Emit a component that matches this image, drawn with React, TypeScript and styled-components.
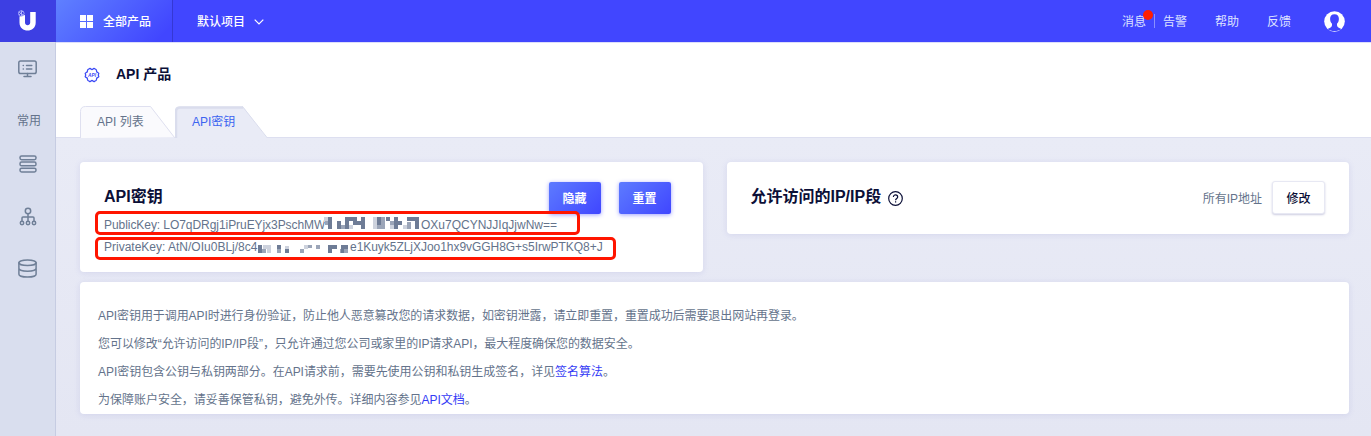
import React from "react";
import styled, { createGlobalStyle } from "styled-components";

const Global = createGlobalStyle`
  * { box-sizing: border-box; }
  body {
    margin: 0;
    font-family: "Liberation Sans", "Noto Sans CJK SC", sans-serif;
    font-size: 12px;
    color: #64738b;
    background: #e4e6f3;
    overflow: hidden;
  }
  p, h1, h2 { margin: 0; }
`;

const Page = styled.div`
  height: 436px;
  display: flex;
  flex-direction: column;
`;
const Header = styled.header`
  height: 42px;
  flex: none;
  display: flex;
  align-items: stretch;
  background: #4146ff;
  color: #fff;
`;
const Logo = styled.div`
  width: 56px;
  background: #3d3fe3;
  display: flex;
  svg { display: block; }
`;
const Products = styled.div`
  width: 117px;
  padding-left: 24px;
  display: flex;
  align-items: center;
  gap: 10px;
  font-weight: 500;
  border-right: 1px solid #3538d4;
  background: linear-gradient(135deg, #5f80ff 0%, #4146ff 90%);
  svg { margin-top: 1px; }
  span { margin-top: -2px; }
`;
const Project = styled.div`
  padding-left: 24px;
  flex: 1;
  display: flex;
  align-items: center;
  gap: 9px;
  font-weight: 500;
  svg { margin-top: 1px; }
  span { margin-top: -2px; }
`;
const Nav = styled.nav`
  display: flex;
  align-items: center;
  padding-right: 26px;
  color: #dfe3ff;
`;
const NavItem = styled.span<{ $gap: number }>`
  position: relative;
  margin-top: -2px;
  margin-right: ${(p) => p.$gap}px;
`;
const Dot = styled.i`
  position: absolute;
  width: 10px;
  height: 10px;
  border-radius: 50%;
  background: #ff1e00;
  top: -2px;
  right: -7px;
`;
const Separator = styled.i`
  width: 1px;
  height: 14px;
  margin-right: 8px;
  background: #8a90ff;
`;
const Body = styled.div`
  flex: 1;
  min-height: 0;
  display: flex;
`;
const Sidebar = styled.aside`
  width: 56px;
  flex: none;
  background: #d9deee;
  border-right: 1px solid #c6cce2;
  padding-top: 17px;
  display: flex;
  flex-direction: column;
  align-items: center;
`;
const SideItem = styled.div<{ $gap: number }>`
  height: 20px;
  margin-bottom: ${(p) => p.$gap}px;
  display: flex;
  align-items: center;
  svg { display: block; }
`;
const SideLabel = styled(SideItem)`
  padding-left: 3px;
`;
const Main = styled.main`
  flex: 1;
  min-width: 0;
  background: linear-gradient(#e9ebf6 95px, #e4e6f3);
`;
const Top = styled.section`
  height: 96px;
  background: #fff;
  border-top: 1px solid #dcdefb;
  border-bottom: 1px solid #dddff0;
  padding-left: 24px;
`;
const TitleRow = styled.div`
  height: 63px;
  padding-left: 4px;
  display: flex;
  align-items: center;
  gap: 16px;
`;
const PageTitle = styled.h1`
  font-size: 14px;
  line-height: 20px;
  font-weight: 700;
  color: #0b0f37;
  padding-bottom: 2px;
`;
const Tabs = styled.div`
  display: flex;
  height: 32px;
`;
const Tab = styled.div<{ $active?: boolean }>`
  position: relative;
  width: 95px;
  padding-left: 17px;
  line-height: 32px;
  color: ${(p) => (p.$active ? "#3c64f0" : "#64738b")};
  span { position: relative; }
`;
const TabShape = styled.svg`
  position: absolute;
  left: 0;
  top: 0;
`;
const Content = styled.section`
  padding: 24px 22px 0 24px;
`;
const CardRow = styled.div`
  display: flex;
  align-items: flex-start;
  gap: 24px;
  margin-bottom: 10px;
`;
const Card = styled.div<{ $height: number }>`
  flex: 1;
  min-width: 0;
  height: ${(p) => p.$height}px;
  background: #fff;
  border-radius: 4px;
  box-shadow: 0 1px 6px rgba(96, 96, 190, 0.14);
  padding: 19px 24px 0;
`;
const NoteCard = styled(Card)`
  padding: 20px 18px 0;
`;
const CardHead = styled.div`
  height: 33px;
  display: flex;
  align-items: center;
`;
const CardTitle = styled.h2`
  flex: 1;
  display: flex;
  align-items: center;
  gap: 7px;
  font-size: 16px;
  line-height: 24px;
  font-weight: 700;
  color: #0b0f37;
  padding-bottom: 1px;
  svg { margin-top: 3px; }
`;
const Primary = styled.button`
  width: 52px;
  height: 32px;
  margin: 1px 8px 0 10px;
  padding: 0 0 2px;
  border: 0;
  border-radius: 2px;
  color: #fff;
  font: inherit;
  font-weight: 700;
  background: linear-gradient(135deg, #5d7bff, #4046ff);
  box-shadow: 0 1px 4px rgba(65, 70, 255, 0.5);
`;
const Secondary = styled.button`
  width: 53px;
  height: 33px;
  margin-left: 10px;
  padding: 0;
  border: 1px solid #e7e8f3;
  border-radius: 3px;
  color: #0b0f37;
  font: inherit;
  font-weight: 500;
  background: #fff;
  box-shadow: 0 1px 2px rgba(60, 60, 140, 0.25);
`;
const Keys = styled.div`
  position: relative;
  margin: -3px 0 0 -9px;
  display: flex;
  flex-direction: column;
  gap: 2px;
`;
const KeyBox = styled.div<{ $w: number; $h: number }>`
  width: ${(p) => p.$w}px;
  height: ${(p) => p.$h}px;
  border: 3px solid #ff1500;
  border-radius: 5px;
  padding-left: 6px;
  display: flex;
  align-items: center;
  white-space: nowrap;
  svg { flex: none; display: block; }
`;
const KeyText = styled.span<{ $w: number; $ls?: number; $down?: number }>`
  width: ${(p) => p.$w}px;
  flex: none;
  line-height: 18px;
  letter-spacing: ${(p) => p.$ls ?? 0}px;
  margin-top: ${(p) => p.$down ?? 0}px;
`;
const Note = styled.p<{ $ls: number }>`
  line-height: 28px;
  letter-spacing: ${(p) => p.$ls}px;
`;
const Link = styled.a`
  color: #343cf5;
`;

type Cell = [number, number, number, number, string];
const D = "#6e7c96", M = "#9ba5b8", L = "#cdd2dd";

const PUBLIC_CELLS: Cell[] = [
  [0, 0, 4, 5, L], [1, 4, 4, 4, M], [4, 0, 4, 12, D],
  [13, 4, 4, 8, D], [17, 8, 4, 4, M], [21, 0, 4, 12, D], [25, 0, 4, 4, D],
  [29, 0, 4, 8, D], [33, 4, 4, 4, D], [37, 0, 4, 12, D], [25, 8, 4, 4, L],
  [49, 0, 4, 12, L], [53, 0, 4, 8, D], [57, 0, 4, 12, M], [53, 8, 4, 4, M],
  [62, 0, 4, 4, D], [66, 4, 4, 4, M], [70, 0, 4, 12, D], [74, 4, 4, 4, D], [66, 8, 4, 4, L],
  [79, 8, 4, 4, L], [83, 5, 4, 7, M],
  [83, 0, 8, 4, D], [91, 0, 4, 12, D],
];
const PRIVATE_CELLS: Cell[] = [
  [0, 0, 4, 8, D], [4, 4, 4, 4, M], [5, 0, 4, 4, L], [9, 0, 4, 8, L],
  [19, 0, 4, 4, D], [19, 4, 4, 4, M], [27, 4, 4, 4, D], [27, 1, 4, 3, L],
  [42, 4, 4, 4, M], [46, 0, 4, 4, L], [50, 0, 4, 3, M],
  [58, 0, 4, 4, M],
  [70, 0, 4, 8, D], [74, 0, 5, 4, D],
  [82, 4, 4, 4, M], [83, 0, 7, 8, D], [86, 4, 4, 4, M],
];

const Mosaic = ({ cells, width, height }: { cells: Cell[]; width: number; height: number }) => (
  <svg width={width} height={height} shapeRendering="crispEdges">
    {cells.map(([x, y, w, h, fill], i) => (
      <rect key={i} x={x} y={y} width={w} height={h} fill={fill} />
    ))}
  </svg>
);

const stroke = { fill: "none", stroke: "#6f7f97", strokeWidth: 1.5, strokeLinecap: "round", strokeLinejoin: "round" } as const;

const LogoIcon = () => (
  <svg width="56" height="42">
    <path d="M19.500 16.500V22.500c0 10.800 16.200 10.800 16.200 0V12h-5.500v10.500c0 3.700-5.200 3.700-5.200 0V15z" fill="#fff" />
    <g fill="none" stroke="#b9bcff" strokeWidth=".8">
      <circle cx="21.300" cy="13.500" r="2.800" />
      <path d="M18.500 12l5 3M19 15l4-4M21.500 10.500v6" />
    </g>
  </svg>
);
const GridIcon = () => (
  <svg width="13" height="13" fill="#fff">
    <path d="M0 0h6v6H0zM7 0h6v6H7zM0 7h6v6H0zM7 7h6v6H7z" />
  </svg>
);
const AvatarIcon = () => (
  <svg width="21" height="21" viewBox="0 0 21 21">
    <circle cx="10.5" cy="10.5" r="10.3" fill="#fff" />
    <path d="M10.5 3.3c3 0 4.4 1.9 4.4 4.5 0 2.2-.7 3.9-1.9 5v1.5c0 1.800 2.200 2.700 4.400 3.700-1.8 1.400-4.2 2.100-6.9 2.100s-5.100-.7-6.900-2.100c2.200-1 4.400-1.900 4.400-3.700v-1.500c-1.200-1.100-1.900-2.800-1.900-5 0-2.600 1.400-4.500 4.400-4.500z" fill="#4146ff" />
  </svg>
);
const ApiIcon = () => (
  <svg width="16" height="16" viewBox="0 0 16 16">
    <path d="M5.300 1.700Q6.300 1.200 7 2Q8 2.900 9 2Q9.700 1.200 10.700 1.700L12 2.500Q12.700 3 12.500 4Q12.500 5.300 13.800 5.500Q14.800 5.800 14.800 6.700Q13.700 8 14.800 9.300Q14.800 10.200 13.800 10.500Q12.500 10.700 12.500 12Q12.700 13 12 13.500L10.700 14.300Q9.700 14.800 9 14Q8 13.100 7 14Q6.300 14.800 5.300 14.300L4 13.500Q3.300 13 3.500 12Q3.500 10.700 2.200 10.500Q1.200 10.200 1.200 9.300Q2.300 8 1.200 6.700Q1.200 5.800 2.200 5.500Q3.500 5.300 3.500 4Q3.300 3 4 2.500Z" fill="none" stroke="#3c4af5" strokeWidth="1.300" />
    <text x="8" y="9.900" fontSize="4.800" fontWeight="700" fontStyle="italic" textAnchor="middle" fill="#3c4af5">API</text>
  </svg>
);
const HelpIcon = () => (
  <svg width="15" height="15" viewBox="0 0 15 15" fill="none" stroke="#0b0f37" strokeWidth="1.200">
    <circle cx="7.500" cy="7.500" r="6.800" />
    <path d="M5.400 5.900c0-2.800 4.300-2.700 4.300 0 0 1.500-2.100 1.600-2.100 3.300M7.600 10.300v1.300" />
  </svg>
);
const MonitorIcon = () => (
  <svg width="19" height="18" viewBox="0 0 19 18" {...stroke}>
    <rect x=".8" y="1" width="17.400" height="12.500" rx="1.800" />
    <path d="M9.500 13.500v2.700M6 16.500h7M8.500 5.500h5.300M8.500 9h5.300M5.200 5.500h.2M5.200 9h.2" />
  </svg>
);
const StackIcon = () => (
  <svg width="18" height="18" viewBox="0 0 18 18" {...stroke}>
    <rect x="1" y="1" width="16" height="3.700" rx="1.600" />
    <rect x="1" y="7.100" width="16" height="3.700" rx="1.600" />
    <rect x="1" y="13.200" width="16" height="3.700" rx="1.600" />
  </svg>
);
const TreeIcon = () => (
  <svg width="18" height="19" viewBox="0 0 18 19" {...stroke}>
    <circle cx="9" cy="4" r="2.700" />
    <path d="M9 6.700v7.500M3 14.200V11q0-1 1-1h10q1 0 1 1v3.200" />
    <circle cx="3" cy="16" r="1.700" />
    <circle cx="9" cy="16" r="1.700" />
    <circle cx="15" cy="16" r="1.700" />
  </svg>
);
const DatabaseIcon = () => (
  <svg width="19" height="19" viewBox="0 0 19 19" {...stroke}>
    <ellipse cx="9.500" cy="3.700" rx="8.600" ry="2.800" />
    <path d="M.9 3.700v11.500c0 1.600 3.800 2.900 8.600 2.900s8.600-1.300 8.600-2.900V3.700M.9 9.300c0 1.600 3.800 2.900 8.600 2.900s8.600-1.300 8.600-2.900" />
  </svg>
);

export default function App() {
  return (
    <Page>
      <Global />
      <Header>
        <Logo><LogoIcon /></Logo>
        <Products><GridIcon /><span>全部产品</span></Products>
        <Project>
          <span>默认项目</span>
          <svg width="10" height="6" fill="none" stroke="#fff" strokeWidth="1.200"><path d="M.7 .7L5 5L9.300 .7" /></svg>
        </Project>
        <Nav>
          <NavItem $gap={8}>消息<Dot /></NavItem>
          <Separator />
          <NavItem $gap={28}>告警</NavItem>
          <NavItem $gap={28}>帮助</NavItem>
          <NavItem $gap={33}>反馈</NavItem>
          <AvatarIcon />
        </Nav>
      </Header>
      <Body>
        <Sidebar>
          <SideItem $gap={30}><MonitorIcon /></SideItem>
          <SideLabel $gap={25}>常用</SideLabel>
          <SideItem $gap={32}><StackIcon /></SideItem>
          <SideItem $gap={32}><TreeIcon /></SideItem>
          <SideItem $gap={0}><DatabaseIcon /></SideItem>
        </Sidebar>
        <Main>
          <Top>
            <TitleRow>
              <ApiIcon />
              <PageTitle>API 产品</PageTitle>
            </TitleRow>
            <Tabs>
              <Tab>
                <TabShape width="96" height="32">
                  <path d="M.5 32V5.500q0-5 5-5H70.500L94.500 31.500" fill="#fafafd" stroke="#dfe0f0" />
                </TabShape>
                <span>API 列表</span>
              </Tab>
              <Tab $active>
                <TabShape width="96" height="32">
                  <path d="M.5 32V5.500q0-5 5-5H68L92 32z" fill="#e9ebf6" />
                  <path d="M1 32V5.500q0-4 4-4H68" fill="none" stroke="#dadded" strokeWidth="2.500" />
                  <path d="M67.500 .5L92 31.500" fill="none" stroke="#dadded" />
                </TabShape>
                <span>API密钥</span>
              </Tab>
            </Tabs>
          </Top>
          <Content>
            <CardRow>
              <Card $height={110}>
                <CardHead>
                  <CardTitle>API密钥</CardTitle>
                  <Primary>隐藏</Primary>
                  <Primary>重置</Primary>
                </CardHead>
                <Keys>
                  <KeyBox $w={485} $h={24}>
                    <KeyText $w={220} $ls={-0.06} $down={3}>PublicKey: LO7qDRgj1iPruEYjx3PschMW</KeyText>
                    <Mosaic cells={PUBLIC_CELLS} width={97} height={12} />
                    <KeyText $w={140} $down={3}>OXu7QCYNJJIqJjwNw==</KeyText>
                  </KeyBox>
                  <KeyBox $w={521} $h={23}>
                    <KeyText $w={154} $down={-3}>PrivateKey: AtN/OIu0BLj/8c4</KeyText>
                    <Mosaic cells={PRIVATE_CELLS} width={92} height={8} />
                    <KeyText $w={256} $ls={-0.04} $down={-3}>e1Kuyk5ZLjXJoo1hx9vGGH8G+s5IrwPTKQ8+J</KeyText>
                  </KeyBox>
                </Keys>
              </Card>
              <Card $height={72}>
                <CardHead>
                  <CardTitle>允许访问的IP/IP段<HelpIcon /></CardTitle>
                  <span>所有IP地址</span>
                  <Secondary>修改</Secondary>
                </CardHead>
              </Card>
            </CardRow>
            <NoteCard $height={132}>
              <Note $ls={-0.08}>API密钥用于调用API时进行身份验证，防止他人恶意篡改您的请求数据，如密钥泄露，请立即重置，重置成功后需要退出网站再登录。</Note>
              <Note $ls={-0.06}>您可以修改“允许访问的IP/IP段”，只允许通过您公司或家里的IP请求API，最大程度确保您的数据安全。</Note>
              <Note $ls={-0.04}>API密钥包含公钥与私钥两部分。在API请求前，需要先使用公钥和私钥生成签名，详见<Link>签名算法</Link>。</Note>
              <Note $ls={-0.02}>为保障账户安全，请妥善保管私钥，避免外传。详细内容参见<Link>API文档</Link>。</Note>
            </NoteCard>
          </Content>
        </Main>
      </Body>
    </Page>
  );
}
